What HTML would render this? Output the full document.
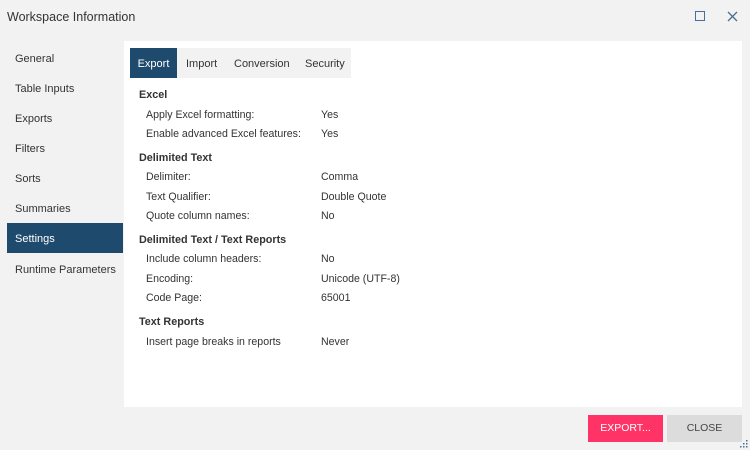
<!DOCTYPE html>
<html><head><style>
*{margin:0;padding:0;box-sizing:border-box}
body{width:750px;height:450px;background:#f2f2f2;font-family:"Liberation Sans",sans-serif;color:#333;position:relative;overflow:hidden;font-size:11px}
.abs{position:absolute}
.title{left:7px;top:10px;font-size:12.5px;color:#333}
.nav{left:15px;font-size:11px;color:#333}
.sel{left:7px;top:223px;width:116px;height:30px;background:#1e4a6e}
.panel{left:124px;top:41px;width:618px;height:366px;background:#fff}
.tabs{left:130px;top:48px;width:221px;height:30px;background:#f2f2f2}
.tab{top:49px;height:30px;line-height:30px;font-size:11px;color:#333}
.h{left:139px;font-weight:bold;font-size:10.8px;color:#333}
.l{left:146px;font-size:10.6px}
.v{left:321px;font-size:10.6px}
.btn{top:415px;height:27px;width:75px;line-height:27px;text-align:center;font-size:10.5px}
</style></head><body>
<div class="abs title">Workspace Information</div>
<div class="abs" style="left:695px;top:11px;width:10px;height:10px;border:1.5px solid #4a6f90"></div>
<svg class="abs" style="left:727px;top:11px" width="11" height="11"><path d="M1 1L10 10M10 1L1 10" stroke="#4a6f90" stroke-width="1.3"/></svg>
<div class="abs sel"></div>
<div class="abs nav" style="top:53px">General</div>
<div class="abs nav" style="top:83px">Table Inputs</div>
<div class="abs nav" style="top:113px">Exports</div>
<div class="abs nav" style="top:143px">Filters</div>
<div class="abs nav" style="top:173px">Sorts</div>
<div class="abs nav" style="top:203px">Summaries</div>
<div class="abs nav" style="top:233px;color:#fff">Settings</div>
<div class="abs nav" style="top:264px">Runtime Parameters</div>
<div class="abs panel"></div>
<div class="abs tabs"></div>
<div class="abs" style="left:130px;top:48px;width:47px;height:30px;background:#1e4a6e"></div>
<div class="abs tab" style="left:130px;width:47px;color:#fff;text-align:center">Export</div>
<div class="abs tab" style="left:186px">Import</div>
<div class="abs tab" style="left:234px">Conversion</div>
<div class="abs tab" style="left:305px">Security</div>
<div class="abs h" style="top:89px">Excel</div>
<div class="abs l" style="top:109px">Apply Excel formatting:</div><div class="abs v" style="top:109px">Yes</div>
<div class="abs l" style="top:128px">Enable advanced Excel features:</div><div class="abs v" style="top:128px">Yes</div>
<div class="abs h" style="top:152px">Delimited Text</div>
<div class="abs l" style="top:171px">Delimiter:</div><div class="abs v" style="top:171px">Comma</div>
<div class="abs l" style="top:191px">Text Qualifier:</div><div class="abs v" style="top:191px">Double Quote</div>
<div class="abs l" style="top:210px">Quote column names:</div><div class="abs v" style="top:210px">No</div>
<div class="abs h" style="top:234px">Delimited Text / Text Reports</div>
<div class="abs l" style="top:253px">Include column headers:</div><div class="abs v" style="top:253px">No</div>
<div class="abs l" style="top:273px">Encoding:</div><div class="abs v" style="top:273px">Unicode (UTF-8)</div>
<div class="abs l" style="top:292px">Code Page:</div><div class="abs v" style="top:292px">65001</div>
<div class="abs h" style="top:316px">Text Reports</div>
<div class="abs l" style="top:336px">Insert page breaks in reports</div><div class="abs v" style="top:336px">Never</div>
<div class="abs btn" style="left:588px;background:#ff3366;color:#fff">EXPORT...</div>
<div class="abs btn" style="left:667px;background:#dcdcdc;color:#444">CLOSE</div>
<svg class="abs" style="left:739px;top:439px" width="10" height="10" fill="#4a6f90"><rect x="7" y="1" width="1.5" height="1.5"/><rect x="4" y="4" width="1.5" height="1.5"/><rect x="7" y="4" width="1.5" height="1.5"/><rect x="1" y="7" width="1.5" height="1.5"/><rect x="4" y="7" width="1.5" height="1.5"/><rect x="7" y="7" width="1.5" height="1.5"/></svg>
</body></html>
